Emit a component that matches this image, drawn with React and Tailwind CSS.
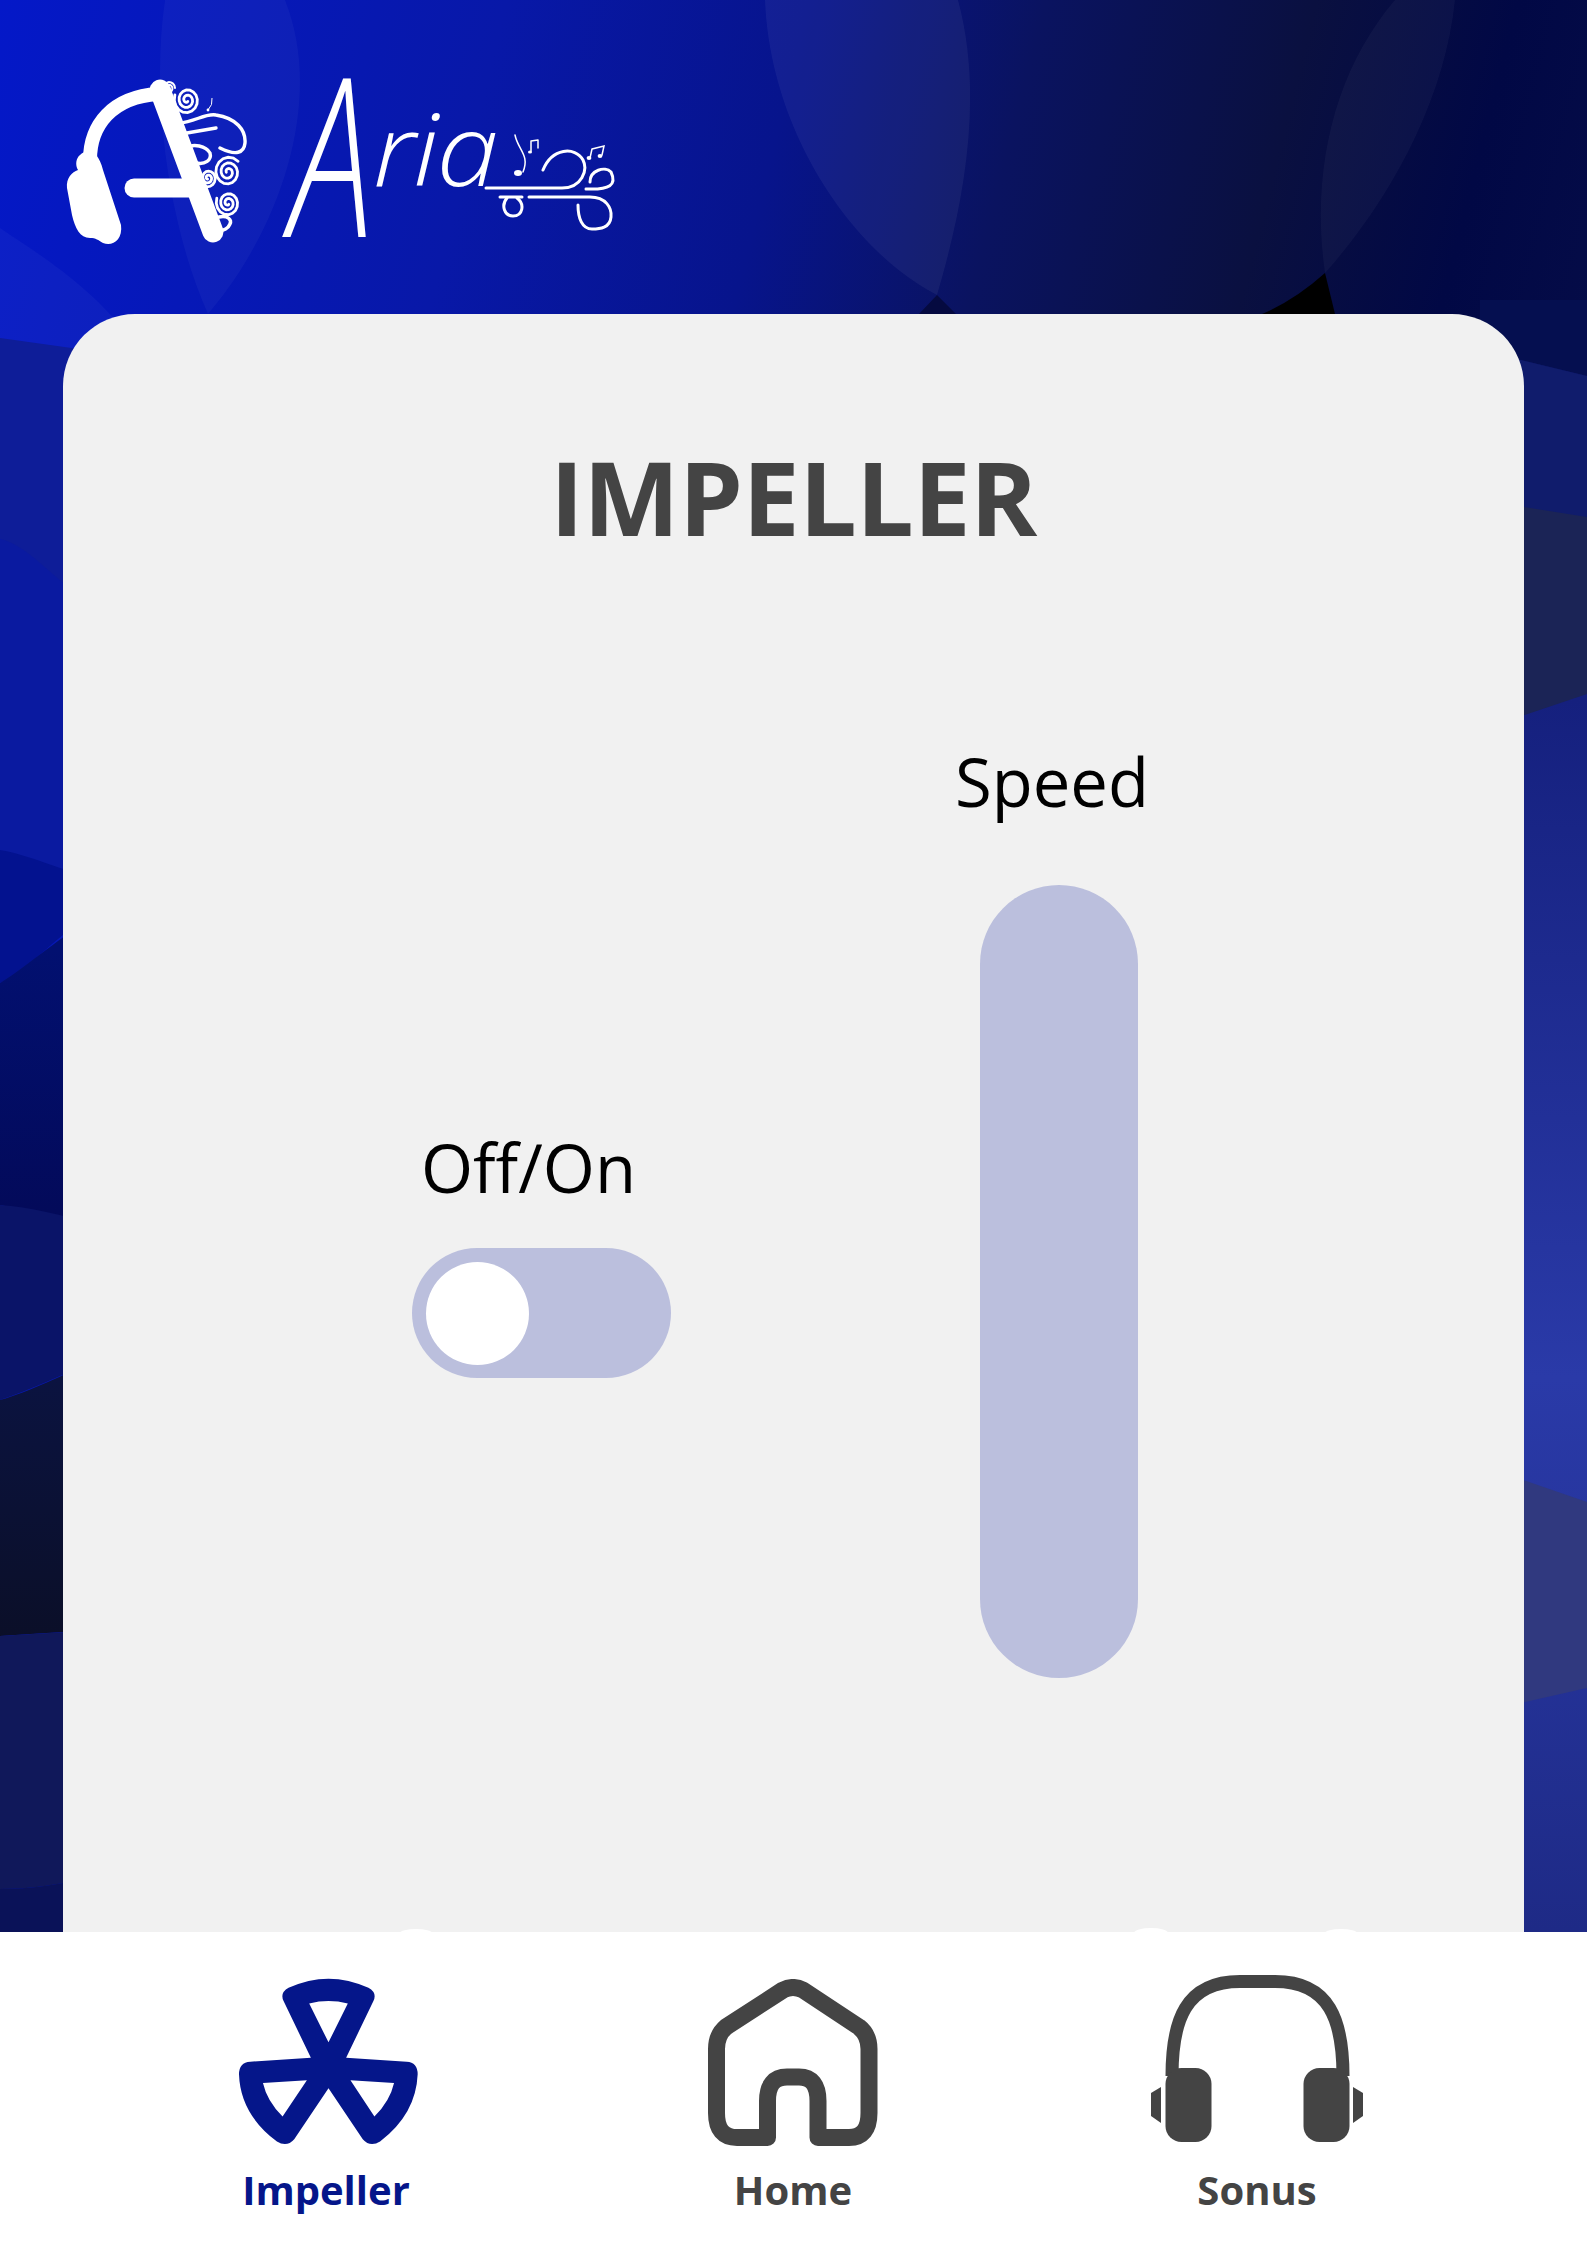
import React from 'react';

const FONT = { fontFamily: '"Open Sans", sans-serif' };

// small spiral used for the swirls in the logo
const spiral = (cx, cy, r, turns = 2, start = 0) => {
  const pts = [];
  const steps = Math.round(turns * 16);
  for (let i = 0; i <= steps; i++) {
    const t = i / steps;
    const a = start + t * turns * Math.PI * 2;
    const rad = r * (0.12 + 0.88 * t);
    pts.push(`${(cx + Math.cos(a) * rad).toFixed(1)} ${(cy + Math.sin(a) * rad * 1.1).toFixed(1)}`);
  }
  return 'M' + pts.join('L');
};

const Background = () => (
  <svg className="absolute inset-0 w-full h-[1932px]" viewBox="0 0 1587 1932" preserveAspectRatio="none">
    <defs>
      <linearGradient id="top" x1="0" y1="0" x2="1587" y2="400" gradientUnits="userSpaceOnUse">
        <stop offset="0" stopColor="#0418c8" />
        <stop offset="0.3" stopColor="#0818a8" />
        <stop offset="0.48" stopColor="#07148c" />
        <stop offset="0.62" stopColor="#0a1360" />
        <stop offset="0.78" stopColor="#0a1040" />
        <stop offset="0.9" stopColor="#010845" />
        <stop offset="1" stopColor="#050c48" />
      </linearGradient>
      <linearGradient id="navyL" x1="0" y1="950" x2="0" y2="1210" gradientUnits="userSpaceOnUse">
        <stop offset="0" stopColor="#021070" />
        <stop offset="1" stopColor="#030a5a" />
      </linearGradient>
      <linearGradient id="darkL" x1="0" y1="1380" x2="0" y2="1640" gradientUnits="userSpaceOnUse">
        <stop offset="0" stopColor="#0b1340" />
        <stop offset="1" stopColor="#0b0f28" />
      </linearGradient>
      <linearGradient id="blueR" x1="0" y1="700" x2="0" y2="1932" gradientUnits="userSpaceOnUse">
        <stop offset="0" stopColor="#15207e" />
        <stop offset="0.55" stopColor="#2a3aa8" />
        <stop offset="1" stopColor="#1e2a86" />
      </linearGradient>
    </defs>
    <rect width="1587" height="1932" fill="url(#top)" />

    {/* lenses in the top band */}
    <path d="M165 0C150 100 170 230 208 314C280 230 325 100 285 0Z" fill="#fff" fillOpacity="0.035" />
    <path d="M0 228C40 255 90 285 132 340L100 400H0Z" fill="#fff" fillOpacity="0.035" />
    <path d="M765 0C770 130 850 250 937 295C962 210 985 100 958 0Z" fill="#fff" fillOpacity="0.05" />
    <path d="M937 295L919 314H956Z" fill="#050a40" />
    <path d="M1395 0C1335 70 1310 170 1325 273C1390 200 1445 100 1455 0Z" fill="#fff" fillOpacity="0.035" />
    <path d="M1325 273Q1295 300 1262 314H1335Z" fill="#000" />

    {/* left strip */}
    <path d="M0 338L100 352V610L0 539Z" fill="#0e1d98" />
    <path d="M0 539C30 545 63 590 100 610V900L0 850Z" fill="#0a1aa0" />
    <path d="M0 850C30 855 60 870 100 880V910C60 930 30 970 0 983Z" fill="#03128f" />
    <path d="M0 983C30 965 60 935 100 915V1225L0 1205Z" fill="url(#navyL)" />
    <path d="M0 1205C30 1207 60 1215 100 1225V1360C60 1375 30 1390 0 1400Z" fill="#0a1468" />
    <path d="M0 1400C30 1392 60 1375 100 1360V1630C60 1632 30 1634 0 1636Z" fill="url(#darkL)" />
    <path d="M0 1636L100 1630V1875C60 1885 30 1889 0 1889Z" fill="#10185a" />
    <path d="M0 1889C30 1889 60 1885 100 1875V1932H0Z" fill="#0a1258" />

    {/* right strip */}
    <path d="M1480 320H1587V1932H1480Z" fill="url(#blueR)" />
    <path d="M1480 350L1587 376V520L1480 500Z" fill="#101c6c" />
    <path d="M1480 500L1587 517V694L1480 730Z" fill="#1b2456" />
    <path d="M1480 300H1587V376L1480 350Z" fill="#050f50" />
    <path d="M1480 1465L1587 1502V1688L1480 1712Z" fill="#30397f" />
  </svg>
);

const LogoMark = () => (
  <svg width="185" height="175" viewBox="62 72 185 175" className="shrink-0">
    <g fill="none" stroke="#fff" strokeLinecap="round">
      <path d="M90 160C90 125 112 97 158 94" strokeWidth="14" />
      <path d="M160 90L213 232" strokeWidth="21" />
      <path d="M134 188H190" strokeWidth="19" />
      <g strokeWidth="2.8">
        <path d={spiral(187, 100, 13, 2.4, 1)} />
        <path d={spiral(169, 88, 6, 2, 0)} strokeWidth="2" />
        <path d={spiral(208, 178, 9, 2.2, 2)} />
        <path d={spiral(228, 172, 14, 2.4, 3)} />
        <path d={spiral(228, 203, 12, 2.4, 1)} />
      </g>
      <g strokeWidth="3.4">
        <path d="M179 123C195 122 205 113 216 115C236 118 246 130 245 143C244 153 236 156 220 148" />
        <path d="M181 134L216 128" />
        <path d="M187 148C193 143 206 146 210 153C212 160 205 165 196 163" />
        <path d="M219 217C228 215 232 220 230 224C228 229 224 230 219 231" />
      </g>
    </g>
    <path d="M80 155C88 148 98 150 103 170L121 225C123 240 112 247 103 243C98 240 96 238 90 238C80 238 75 228 72 215L67 188C66 178 72 172 78 170C75 165 76 158 80 155Z" fill="#fff" />
    <path d="M208 110Q213 105 212 98" fill="none" stroke="#fff" strokeWidth="1" />
    <circle cx="208" cy="110" r="1.4" fill="#fff" />
  </svg>
);

const LogoText = () => (
  <div className="relative w-[340px] h-[175px] ml-[34px] shrink-0 text-white">
    <span className="absolute left-[9px] top-[-31px] text-[221px] leading-none italic font-light origin-left scale-x-[0.68]">
      A
    </span>
    <span className="absolute left-[92px] top-[25px] text-[100px] leading-none italic font-light tracking-[-2px] origin-left scale-x-[1.12]">
      ria
    </span>
    <svg className="absolute left-[194px] top-0" width="145" height="175" viewBox="475 72 145 175">
      <g fill="none" stroke="#fff" strokeWidth="3" strokeLinecap="round">
        <path d="M486 188H562C582 188 588 170 583 160C575 146 552 148 543 170" />
        <path d="M590 182C590 170 605 166 611 172C617 185 610 190 586 189" />
        <path d="M500 197H522" />
        <path d="M507 198C501 205 504 216 513 216C523 216 525 204 517 198" />
        <path d="M529 197H590C606 197 612 208 611 217C610 228 600 229 592 229C582 229 578 218 578 205" />
      </g>
      <g fill="none" stroke="#fff" strokeWidth="1.5" strokeLinecap="round">
        <path d="M515 135C518 150 530 155 523 172" />
        <path d="M531 141L538 140M531 141V151M538 140V148" />
        <path d="M592 149L604 146L602 155M592 149L590 158" />
      </g>
      <g fill="#fff">
        <ellipse cx="518" cy="173" rx="4" ry="3" />
        <ellipse cx="530" cy="152" rx="2" ry="1.6" />
        <ellipse cx="589" cy="158" rx="2.4" ry="2" />
        <ellipse cx="600" cy="156" rx="2.4" ry="2" />
      </g>
    </svg>
  </div>
);

const ImpellerIcon = () => (
  <svg width="183" height="170" viewBox="170 225 550 510" className="block -translate-x-[1px]">
    <path
      fillRule="evenodd"
      fill="#05168a"
      d="M392 470L310 300Q298 275 325 260Q445 205 565 260Q592 275 580 300L498 470L680 482Q713 484 713 520Q708 640 600 722Q570 740 548 715L445 562L342 715Q320 740 290 722Q180 640 176 520Q176 484 210 482ZM387 307Q445 292 503 307L445 424ZM248 546L380 538L307 647Q260 600 248 546ZM642 546L511 538L583 647Q630 600 642 546Z"
    />
  </svg>
);

const HomeIcon = () => (
  <svg width="170" height="167" viewBox="709 1978 170 167" className="block">
    <path
      fill="none"
      stroke="#444444"
      strokeWidth="17"
      strokeLinejoin="round"
      d="M768.5 2136.5H738Q717.5 2136.5 717.5 2112V2048Q717.5 2034 727 2026L784 1989Q794 1984 804 1989L860 2026Q870 2034 870 2048V2112Q870 2136.5 850 2136.5H819V2100Q819 2076 800 2076H788Q768.5 2076 768.5 2100Z"
    />
  </svg>
);

const HeadphonesIcon = () => (
  <svg width="212" height="167" viewBox="1151 1974 212 167" className="block mb-[4px]">
    <path fill="none" stroke="#444444" strokeWidth="13" d="M1172 2075C1172 2020 1185 1980.5 1240 1980.5H1275C1330 1980.5 1343 2020 1343 2075" />
    <rect x="1165.5" y="2067" width="46" height="74" rx="16" fill="#444444" />
    <rect x="1303.5" y="2067" width="46" height="74" rx="16" fill="#444444" />
    <path d="M1151 2092L1161 2086V2122L1151 2115Z" fill="#444444" />
    <path d="M1363 2092L1353 2086V2122L1363 2115Z" fill="#444444" />
  </svg>
);

const NavItem = ({ icon, label, active }) => (
  <div className="w-[300px] flex flex-col items-center">
    <div className="h-[171px] flex items-end justify-center">{icon}</div>
    <span className={`mt-[16px] text-[40px] leading-[56px] font-bold ${active ? 'text-[#05168a] -translate-x-[3px]' : 'text-[#444444]'}`}>{label}</span>
  </div>
);

export default function App() {
  return (
    <div className="relative w-full h-[2245px] overflow-hidden flex flex-col" style={FONT}>
      <Background />

      <header className="relative h-[314px] shrink-0 flex items-start pl-[62px] pt-[72px]">
        <LogoMark />
        <LogoText />
      </header>

      <main className="relative flex-1 mx-[63px] bg-[#f1f1f1] rounded-t-[72px]">
        <h1 className="pt-[113px] text-center text-[102px] leading-[139px] font-bold text-[#444444] tracking-[-0.5px]">
          IMPELLER
        </h1>

        <div className="flex items-start pl-[349px] mt-[170px]">
          <div className="w-[259px] mt-[386px]">
            <div className="pl-[9px] text-[67px] leading-[90px] text-black">Off/On</div>
            <div className="mt-[36px] h-[130px] rounded-full bg-[#bbbfdd] flex items-center pl-[14px]">
              <div className="w-[103px] h-[103px] rounded-full bg-white" />
            </div>
          </div>
          <div className="ml-[309px] w-[158px] flex flex-col items-center">
            <div className="text-[67px] leading-[90px] text-black -translate-x-[7px]">Speed</div>
            <div className="mt-[59px] w-[158px] h-[793px] rounded-full bg-[#bbbfdd]" />
          </div>
        </div>
      </main>

      <nav className="relative h-[313px] shrink-0 bg-white flex gap-[164px] pl-[179px] pt-[43px]">
        <div className="absolute left-[400px] -top-[3px] w-[32px] h-[8px] rounded-[50%] bg-white" />
        <div className="absolute left-[1134px] -top-[4px] w-[34px] h-[10px] rounded-[50%] bg-white" />
        <div className="absolute left-[1325px] -top-[3px] w-[32px] h-[8px] rounded-[50%] bg-white" />
        <NavItem icon={<ImpellerIcon />} label="Impeller" active />
        <NavItem icon={<HomeIcon />} label="Home" />
        <NavItem icon={<HeadphonesIcon />} label="Sonus" />
      </nav>
    </div>
  );
}
